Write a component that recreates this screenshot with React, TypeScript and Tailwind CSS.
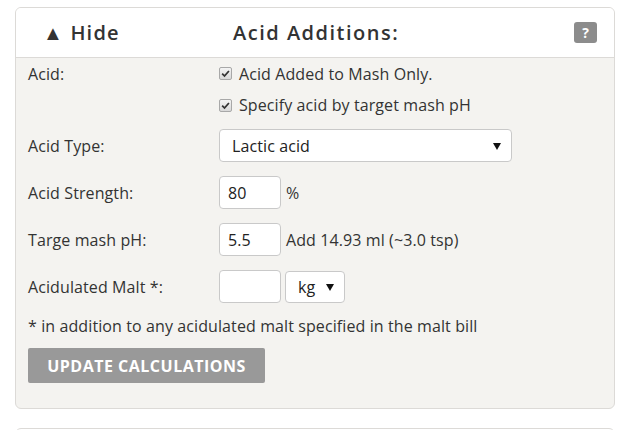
import { useState } from "react";

function Check({ label, h }: { label: string; h: string }) {
  return (
    <label className={`flex items-center gap-[7px] ${h}`}>
      <span className="w-[13px] h-[13px] rounded-[2px] border border-[#a8a8a8] bg-gradient-to-b from-[#f4f4f4] to-[#d8d8d8] flex items-center justify-center">
        <svg viewBox="0 0 10 10" className="w-[9px] h-[9px]">
          <path d="M1.3 5.2 L3.9 7.8 L8.8 2.2" fill="none" stroke="#333" strokeWidth="2" />
        </svg>
      </span>
      <span>{label}</span>
    </label>
  );
}

function Caret() {
  return (
    <svg viewBox="0 0 8 8" className="w-[8px] h-[8px] absolute top-1/2 -translate-y-1/2 right-[11px] pointer-events-none">
      <path d="M0 1 H8 L4 8 Z" fill="#111" />
    </svg>
  );
}

export default function App() {
  const [acid, setAcid] = useState("Lactic acid");
  const [unit, setUnit] = useState("kg");

  const input =
    "h-[33px] w-[62px] rounded-[4px] border border-[#c9c9c9] bg-white px-[8px] text-[16px] text-[#222] outline-none";

  return (
    <div className="w-[634px] h-[430px] bg-white pt-[7px] px-[15px] overflow-hidden font-['Open_Sans',sans-serif] text-[16px] tracking-[0.1px] text-[#333]">
      <div className="w-[600px] rounded-[6px] border border-[#dcdad7] bg-[#f4f3f0] overflow-hidden">
        {/* header */}
        <div className="h-[50px] bg-white border-b border-[#dcdad7] flex items-center pl-[27px] pr-[17px] text-[20px] font-semibold tracking-[1.5px] text-[#333]">
          <span className="w-[190px] tracking-[1.2px]">▲ Hide</span>
          <span className="flex-1">Acid Additions:</span>
          <span className="w-[23px] h-[21px] rounded-[3px] bg-[#8c8c8c] text-white text-[14px] font-bold tracking-normal flex items-center justify-center">
            ?
          </span>
        </div>

        {/* body */}
        <div className="pl-[12px] pb-[25px]">
          <div className="flex">
            <div className="w-[191px] h-[31px] flex items-center">Acid:</div>
            <div className="flex flex-col">
              <Check label="Acid Added to Mash Only." h="h-[31px]" />
              <Check label="Specify acid by target mash pH" h="h-[32px]" />
            </div>
          </div>

          <div className="flex items-center mt-[8px]">
            <div className="w-[191px]">Acid Type:</div>
            <div className="relative">
              <select
                value={acid}
                onChange={(e) => setAcid(e.target.value)}
                className="appearance-none h-[33px] w-[293px] rounded-[4px] border border-[#c9c9c9] bg-white pl-[12px] text-[16px] text-[#222] outline-none"
              >
                <option>Lactic acid</option>
                <option>Phosphoric acid</option>
                <option>Hydrochloric acid</option>
                <option>Sulfuric acid</option>
              </select>
              <Caret />
            </div>
          </div>

          <div className="flex items-center mt-[14px]">
            <div className="w-[191px]">Acid Strength:</div>
            <input className={input} defaultValue="80" />
            <span className="ml-[5px]">%</span>
          </div>

          <div className="flex items-center mt-[14px]">
            <div className="w-[191px]">Targe mash pH:</div>
            <input className={input} defaultValue="5.5" />
            <span className="ml-[5px]">Add 14.93 ml (~3.0 tsp)</span>
          </div>

          <div className="flex items-center mt-[14px]">
            <div className="w-[191px]">Acidulated Malt *:</div>
            <input className={input} defaultValue="" />
            <div className="relative ml-[4px]">
              <select
                value={unit}
                onChange={(e) => setUnit(e.target.value)}
                className="appearance-none h-[32px] w-[60px] rounded-[4px] border border-[#c9c9c9] bg-white pl-[12px] text-[16px] text-[#222] outline-none"
              >
                <option>kg</option>
                <option>lb</option>
              </select>
              <Caret />
            </div>
          </div>

          <p className="mt-[11px] leading-[24px]">* in addition to any acidulated malt specified in the malt bill</p>

          <button className="mt-[10px] h-[35px] w-[237px] rounded-[2px] bg-[#999999] text-white text-[16px] font-bold tracking-[0.5px] uppercase">
            Update Calculations
          </button>
        </div>
      </div>

      <div className="mt-[19px] w-[600px] h-[40px] rounded-t-[6px] border border-[#dcdad7] bg-white" />
    </div>
  );
}
